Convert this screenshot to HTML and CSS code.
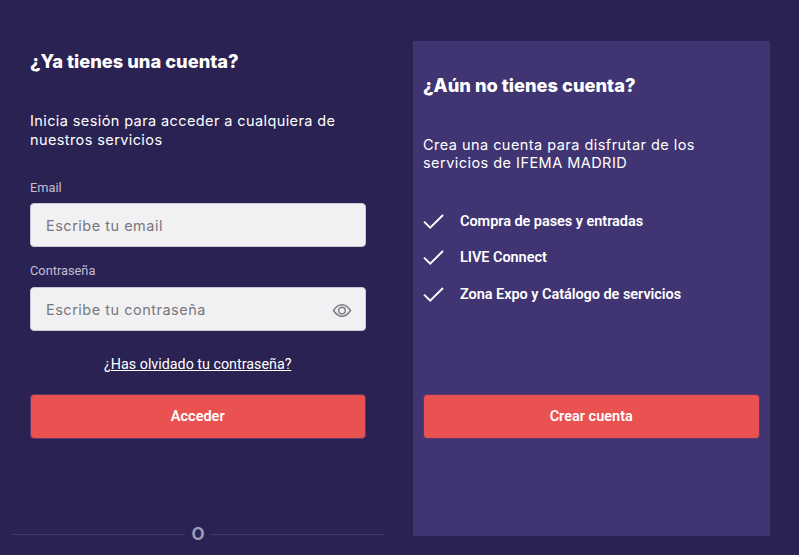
FILE: index.html
```html
<!DOCTYPE html>
<html lang="es">
<head>
<meta charset="utf-8">
<title>Acceso</title>
<link rel="stylesheet" href="styles.css">
</head>
<body>
<main class="page">
  <section class="login">
    <div class="login-form">
      <h2 class="title">¿Ya tienes una cuenta?</h2>
      <p class="intro">Inicia sesión para acceder a cualquiera de nuestros servicios</p>
      <label class="label label-email">Email</label>
      <div class="field"><span class="placeholder">Escribe tu email</span></div>
      <label class="label label-pass">Contraseña</label>
      <div class="field">
        <span class="placeholder">Escribe tu contraseña</span>
        <svg class="eye" width="20" height="17" viewBox="0 0 20 17" fill="none" stroke="#7a7a7f" stroke-width="1.4"><path d="M1.5 8.5C4 4.6 6.8 2.7 10 2.7S16 4.6 18.5 8.5C16 12.4 13.2 14.3 10 14.3S4 12.4 1.5 8.5Z"/><circle cx="10" cy="8.5" r="3.3"/></svg>
      </div>
      <a class="forgot" href="#">¿Has olvidado tu contraseña?</a>
      <button class="btn" type="button">Acceder</button>
    </div>
    <div class="divider"><span class="line"></span><span class="or">O</span><span class="line"></span></div>
  </section>
  <section class="signup">
    <h2 class="title">¿Aún no tienes cuenta?</h2>
    <p class="intro">Crea una cuenta para disfrutar de los servicios de IFEMA MADRID</p>
    <ul class="benefits">
      <li class="benefit"><svg class="check" width="21" height="15" viewBox="0 0 21 15" fill="none" stroke="#fff" stroke-width="1.9"><path d="M1 7.6L7.2 13.6L20 1"/></svg>Compra de pases y entradas</li>
      <li class="benefit"><svg class="check" width="21" height="15" viewBox="0 0 21 15" fill="none" stroke="#fff" stroke-width="1.9"><path d="M1 7.6L7.2 13.6L20 1"/></svg>LIVE Connect</li>
      <li class="benefit"><svg class="check" width="21" height="15" viewBox="0 0 21 15" fill="none" stroke="#fff" stroke-width="1.9"><path d="M1 7.6L7.2 13.6L20 1"/></svg>Zona Expo y Catálogo de servicios</li>
    </ul>
    <button class="btn" type="button">Crear cuenta</button>
  </section>
</main>
</body>
</html>
```
FILE: styles.css
```css
* { box-sizing: border-box; }
html, body { margin: 0; height: 100%; overflow: hidden; }
body { background: #2a2252; color: #fff; font-family: Inter, "Liberation Sans", sans-serif; }
.page { display: flex; height: 555px; }
.login { width: 413px; display: flex; flex-direction: column; }
.login-form { padding: 51px 0 0 30px; width: 365.5px; flex: 1; display: flex; flex-direction: column; }
.title { margin: 0; font-size: 18.3px; line-height: 20px; font-weight: 800; letter-spacing: 0; }
.intro { margin: 40px 0 0; font-size: 14.5px; line-height: 19px; font-weight: 400; letter-spacing: 0.4px; }
.label { display: block; font-family: Roboto, sans-serif; font-size: 12.8px; line-height: 16px; color: #c3bfd2; }
.label-email { margin-top: 31px; margin-bottom: 7px; }
.label-pass { margin-top: 16px; margin-bottom: 8px; }
.field { height: 44px; background: #f1f1f3; border-radius: 4px; border: 1px solid #c9c8d2; padding: 0 13px 0 15px; display: flex; align-items: center; justify-content: space-between; }
.placeholder { font-size: 14.5px; color: #77777d; letter-spacing: 0.5px; }
.eye { margin-top: 3px; }
.forgot { margin-top: 24px; align-self: center; font-family: Roboto, sans-serif; font-size: 14.3px; line-height: 18px; color: #fff; }
.btn { display: block; width: 100%; height: 45px; border: 1px solid #5e3767; border-radius: 4px; background: #ea5252; color: #fff; font-family: Roboto, sans-serif; font-size: 14.5px; font-weight: 600; cursor: pointer; }
.login .btn { margin-top: 21px; }
.divider { display: flex; align-items: center; gap: 6px; margin: 0 0 13px 12px; width: 372px; }
.line { flex: 1; height: 1px; background: #443a6e; }
.or { font-size: 17px; line-height: 16px; font-weight: 700; color: #a09bb8; }
.signup { margin-top: 41px; width: 356.5px; height: 495px; background: #403572; padding: 34px 10px 0; display: flex; flex-direction: column; }
.signup .intro { margin-top: 41px; max-width: 290px; line-height: 18px; letter-spacing: 0.46px; }
.benefits { list-style: none; margin: 31px 0 0; padding: 0; height: 191px; }
.benefit { display: flex; align-items: center; gap: 16px; height: 36.5px; font-family: Roboto, sans-serif; font-size: 14.5px; font-weight: 600; letter-spacing: -0.05px; }
.check { flex: none; }
```
